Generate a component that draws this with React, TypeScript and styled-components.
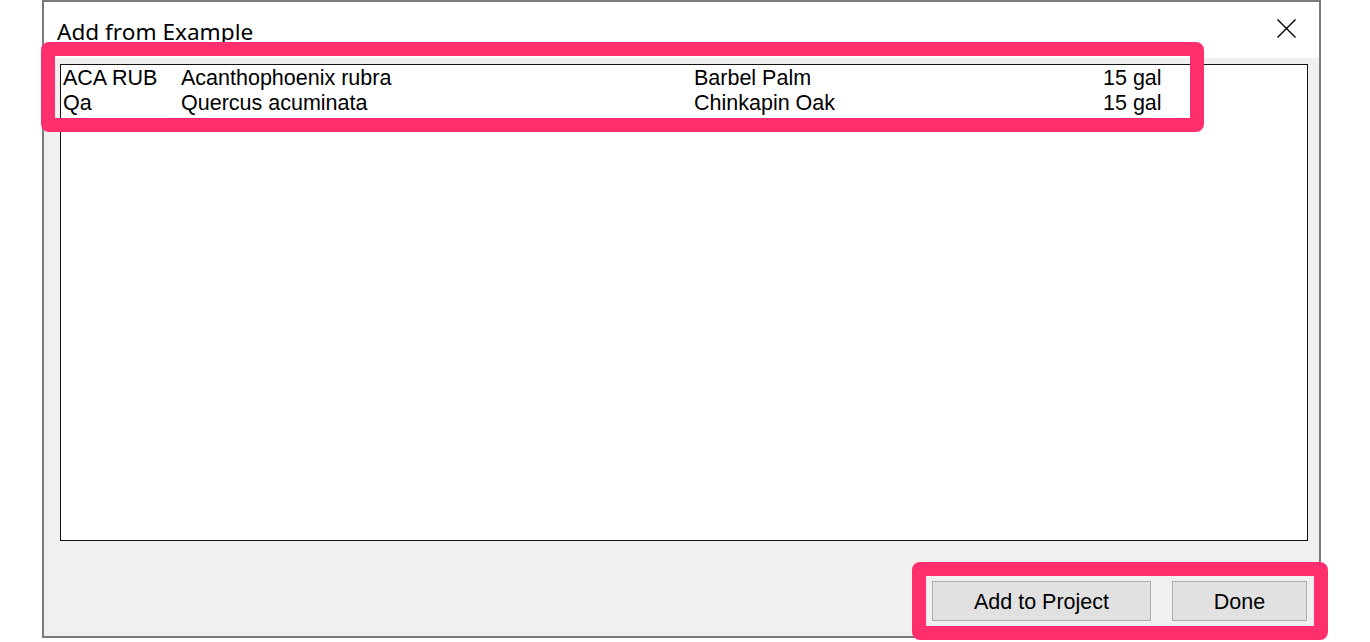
import React from "react";
import styled, { createGlobalStyle } from "styled-components";

const GlobalStyle = createGlobalStyle`
  html, body { margin: 0; padding: 0; background: #ffffff; }
  body { width: 1370px; height: 642px; overflow: hidden; }
`;

const Page = styled.div`
  position: relative;
  width: 1370px;
  height: 642px;
  padding-left: 42px;
  box-sizing: border-box;
`;

const Window = styled.div`
  width: 1279px;
  height: 638px;
  box-sizing: border-box;
  border: 2px solid #7a7a7a;
  display: flex;
  flex-direction: column;
  background: #f0f0f0;
`;

const TitleBar = styled.div`
  height: 56px;
  flex: none;
  background: #ffffff;
  display: flex;
  align-items: center;
  justify-content: space-between;
  padding: 0 23px 0 13px;
`;

const Title = styled.div`
  font-family: "Noto Sans", "Open Sans", sans-serif;
  font-size: 22.6px;
  color: #000000;
  padding-top: 2px;
`;

const CloseButton = styled.button`
  width: 19px;
  height: 19px;
  padding: 0;
  border: none;
  background: transparent;
  display: flex;
  margin-bottom: 4px;
`;

const Body = styled.div`
  flex: 1;
  display: flex;
  flex-direction: column;
  padding: 6px 11px 15px 16px;
  box-sizing: border-box;
`;

const ListBox = styled.div`
  height: 477px;
  box-sizing: border-box;
  border: 1px solid #141414;
  background: #ffffff;
  padding: 1px 0 0 2px;
`;

const Row = styled.div`
  display: grid;
  grid-template-columns: 118px 513px 409px auto;
  font-family: "Liberation Sans", Arial, sans-serif;
  font-size: 21.5px;
  line-height: 25px;
  color: #000000;
  white-space: nowrap;
`;

const Cell = styled.span``;

const ButtonRow = styled.div`
  display: flex;
  justify-content: flex-end;
  gap: 21px;
  margin-top: 40px;
  padding-right: 1px;
`;

const Button = styled.button<{ $w: number }>`
  width: ${(p) => p.$w}px;
  height: 40px;
  box-sizing: border-box;
  border: 1px solid #adadad;
  background: #e1e1e1;
  font-family: "Liberation Sans", Arial, sans-serif;
  font-size: 21.5px;
  color: #000000;
  padding: 2px 0 0;
`;

const Highlight = styled.div<{ $l: number; $t: number; $w: number; $h: number }>`
  position: absolute;
  left: ${(p) => p.$l}px;
  top: ${(p) => p.$t}px;
  width: ${(p) => p.$w}px;
  height: ${(p) => p.$h}px;
  box-sizing: border-box;
  border: 14px solid #ff2f6e;
  border-radius: 8px;
  pointer-events: none;
`;

const rows = [
  ["ACA RUB", "Acanthophoenix rubra", "Barbel Palm", "15 gal"],
  ["Qa", "Quercus acuminata", "Chinkapin Oak", "15 gal"],
];

export default function App() {
  return (
    <Page>
      <GlobalStyle />
      <Window>
        <TitleBar>
          <Title>Add from Example</Title>
          <CloseButton aria-label="Close">
            <svg width="19" height="19" viewBox="0 0 19 19">
              <path d="M0.5 0.5 L18.5 18.5 M18.5 0.5 L0.5 18.5" stroke="#000" strokeWidth="1.4" fill="none" />
            </svg>
          </CloseButton>
        </TitleBar>
        <Body>
          <ListBox>
            {rows.map((r, i) => (
              <Row key={i}>
                {r.map((c, j) => (
                  <Cell key={j}>{c}</Cell>
                ))}
              </Row>
            ))}
          </ListBox>
          <ButtonRow>
            <Button $w={219}>Add to Project</Button>
            <Button $w={135}>Done</Button>
          </ButtonRow>
        </Body>
      </Window>
      <Highlight $l={41} $t={42} $w={1163} $h={90} />
      <Highlight $l={912} $t={562} $w={416} $h={78} />
    </Page>
  );
}
